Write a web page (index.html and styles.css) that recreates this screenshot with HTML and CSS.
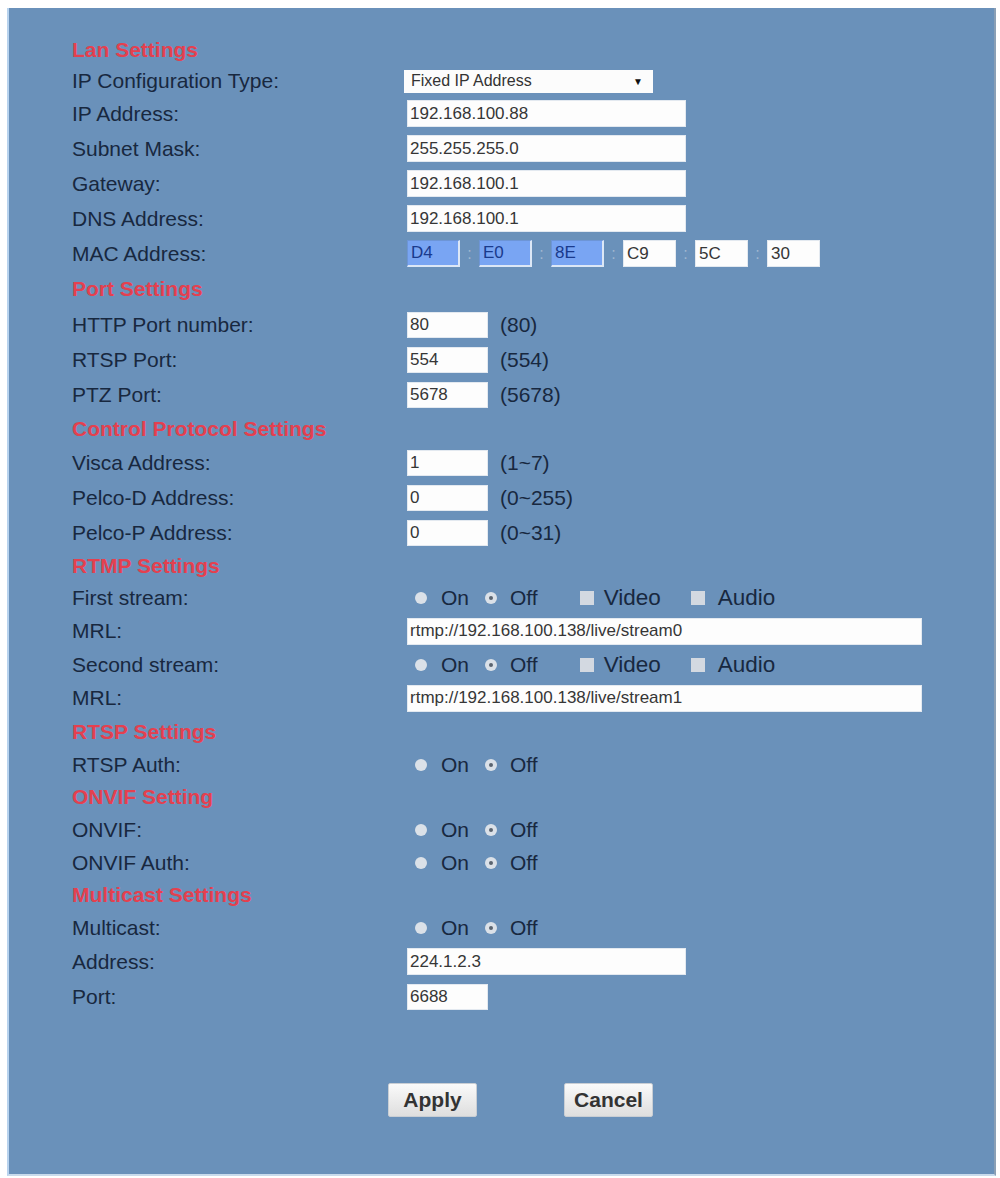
FILE: index.html
```html
<!DOCTYPE html>
<html lang="en">
<head>
<meta charset="utf-8">
<title>Network Settings</title>
<link rel="stylesheet" href="styles.css">
</head>
<body>
<div class="page">
  <div class="panel">
    <div class="form">
      <div class="row h33 head">Lan Settings</div>
      <div class="row h30">
        <span class="label">IP Configuration Type:</span>
        <div class="select"><span>Fixed IP Address</span><span class="arrow">&#9660;</span></div>
      </div>
      <div class="row h35"><span class="label">IP Address:</span><span class="input wide">192.168.100.88</span></div>
      <div class="row h35"><span class="label">Subnet Mask:</span><span class="input wide">255.255.255.0</span></div>
      <div class="row h35"><span class="label">Gateway:</span><span class="input wide">192.168.100.1</span></div>
      <div class="row h35"><span class="label">DNS Address:</span><span class="input wide">192.168.100.1</span></div>
      <div class="row h35">
        <span class="label">MAC Address:</span>
        <div class="mac">
          <span class="mbox sel">D4</span><span class="sep">:</span>
          <span class="mbox sel">E0</span><span class="sep">:</span>
          <span class="mbox sel">8E</span><span class="sep">:</span>
          <span class="mbox">C9</span><span class="sep">:</span>
          <span class="mbox">5C</span><span class="sep">:</span>
          <span class="mbox">30</span>
        </div>
      </div>

      <div class="row h36 head">Port Settings</div>
      <div class="row h35"><span class="label">HTTP Port number:</span><span class="input short">80</span><span class="hint">(80)</span></div>
      <div class="row h35"><span class="label">RTSP Port:</span><span class="input short">554</span><span class="hint">(554)</span></div>
      <div class="row h35"><span class="label">PTZ Port:</span><span class="input short">5678</span><span class="hint">(5678)</span></div>

      <div class="row h33 head">Control Protocol Settings</div>
      <div class="row h35"><span class="label">Visca Address:</span><span class="input short">1</span><span class="hint">(1~7)</span></div>
      <div class="row h35"><span class="label">Pelco-D Address:</span><span class="input short">0</span><span class="hint">(0~255)</span></div>
      <div class="row h35"><span class="label">Pelco-P Address:</span><span class="input short">0</span><span class="hint">(0~31)</span></div>

      <div class="row h31 head">RTMP Settings</div>
      <div class="row h33">
        <span class="label">First stream:</span>
        <div class="opts">
          <span class="radio"></span><span class="opt">On</span>
          <span class="radio checked"></span><span class="opt">Off</span>
          <span class="check"></span><span class="opt big">Video</span>
          <span class="check second"></span><span class="opt big">Audio</span>
        </div>
      </div>
      <div class="row h34"><span class="label">MRL:</span><span class="input mrl">rtmp://192.168.100.138/live/stream0</span></div>
      <div class="row h33">
        <span class="label">Second stream:</span>
        <div class="opts">
          <span class="radio"></span><span class="opt">On</span>
          <span class="radio checked"></span><span class="opt">Off</span>
          <span class="check"></span><span class="opt big">Video</span>
          <span class="check second"></span><span class="opt big">Audio</span>
        </div>
      </div>
      <div class="row h34"><span class="label">MRL:</span><span class="input mrl">rtmp://192.168.100.138/live/stream1</span></div>

      <div class="row h33 head">RTSP Settings</div>
      <div class="row h33">
        <span class="label">RTSP Auth:</span>
        <div class="opts"><span class="radio"></span><span class="opt">On</span><span class="radio checked"></span><span class="opt">Off</span></div>
      </div>

      <div class="row h32 head">ONVIF Setting</div>
      <div class="row h33">
        <span class="label">ONVIF:</span>
        <div class="opts"><span class="radio"></span><span class="opt">On</span><span class="radio checked"></span><span class="opt">Off</span></div>
      </div>
      <div class="row h33">
        <span class="label">ONVIF Auth:</span>
        <div class="opts"><span class="radio"></span><span class="opt">On</span><span class="radio checked"></span><span class="opt">Off</span></div>
      </div>

      <div class="row h32 head">Multicast Settings</div>
      <div class="row h33">
        <span class="label">Multicast:</span>
        <div class="opts"><span class="radio"></span><span class="opt">On</span><span class="radio checked"></span><span class="opt">Off</span></div>
      </div>
      <div class="row h35"><span class="label">Address:</span><span class="input wide">224.1.2.3</span></div>
      <div class="row h35"><span class="label">Port:</span><span class="input short">6688</span></div>
    </div>

    <div class="buttons">
      <button class="btn">Apply</button>
      <button class="btn">Cancel</button>
    </div>
  </div>
</div>
</body>
</html>
```
FILE: styles.css
```css
html, body {
  margin: 0;
  padding: 0;
  background: #ffffff;
}

.page {
  padding: 8px 4px 2px 7px;
}

.panel {
  box-sizing: border-box;
  width: 989px;
  height: 1168px;
  background: #6a91ba;
  border-left: 2px solid #b8d3ee;
  border-right: 2px solid #8a9fb5;
  border-bottom: 2px solid #c9dbec;
  padding-top: 25px;
  padding-left: 63px;
  font-family: "Liberation Sans", Arial, sans-serif;
  color: #18283f;
}

.form {
  display: flex;
  flex-direction: column;
}

.row {
  display: flex;
  align-items: center;
  font-size: 21px;
}

.h30 { height: 30px; }
.h31 { height: 31px; }
.h32 { height: 32px; }
.h33 { height: 33px; }
.h34 { height: 34px; }
.h35 { height: 35px; }
.h36 { height: 36px; }

.head {
  color: #e4404f;
  font-weight: bold;
  font-size: 21px;
}

.label {
  width: 332px;
  flex: none;
}

.select {
  box-sizing: border-box;
  width: 249px;
  height: 23px;
  background: #fcfcfc;
  display: flex;
  align-items: center;
  justify-content: space-between;
  padding: 0 10px 0 7px;
  font-size: 16px;
  color: #333;
}

.arrow {
  font-size: 10px;
  color: #111;
}

.input {
  box-sizing: border-box;
  height: 27px;
  margin-left: 3px;
  background: #fdfdfd;
  border: 1px solid #e3e9f0;
  font-size: 17px;
  color: #363636;
  display: flex;
  align-items: center;
  padding-left: 2px;
}

.wide { width: 279px; }
.short { width: 81px; height: 26px; }
.mrl { width: 515px; }

.hint {
  margin-left: 12px;
}

.mac {
  display: flex;
  align-items: center;
  margin-left: 3px;
}

.mbox {
  box-sizing: border-box;
  width: 53px;
  height: 27px;
  background: #fdfdfd;
  border: 1px solid #e3e9f0;
  font-size: 17px;
  color: #363636;
  display: flex;
  align-items: center;
  padding-left: 3px;
}

.mbox.sel {
  background: #79a5f3;
  color: #1a3a8c;
  border-top: 1px solid #6d95d6;
  border-left: 1px solid #6d95d6;
  border-right: 2px solid #dce7f6;
  border-bottom: 2px solid #dce7f6;
}

.sep {
  width: 19px;
  text-align: center;
  font-size: 16px;
  color: #9fb6cf;
}

.opts {
  display: flex;
  align-items: center;
  padding-left: 11px;
}

.radio {
  width: 12px;
  height: 12px;
  border-radius: 50%;
  background: #dbe1e8;
  display: flex;
  align-items: center;
  justify-content: center;
  margin-right: 14px;
}

.radio.checked {
  margin-left: 16px;
  margin-right: 13px;
}

.radio.checked::after {
  content: "";
  width: 4px;
  height: 4px;
  border-radius: 50%;
  background: #5a6470;
}

.check {
  width: 14px;
  height: 14px;
  background: #d3d9e1;
  margin-left: 42px;
  margin-right: 10px;
}

.check.second {
  margin-left: 30px;
  margin-right: 13px;
}

.opt {
  font-size: 21px;
}

.opt.big {
  font-size: 22.5px;
}

.buttons {
  display: flex;
  gap: 87px;
  margin-top: 69px;
  padding-left: 316px;
}

.btn {
  width: 89px;
  height: 34px;
  border: 1px solid #c9ced4;
  border-radius: 2px;
  background: linear-gradient(#fafafa, #dedede);
  font-family: "Liberation Sans", Arial, sans-serif;
  font-weight: bold;
  font-size: 21px;
  color: #333;
  padding: 0;
}
```
